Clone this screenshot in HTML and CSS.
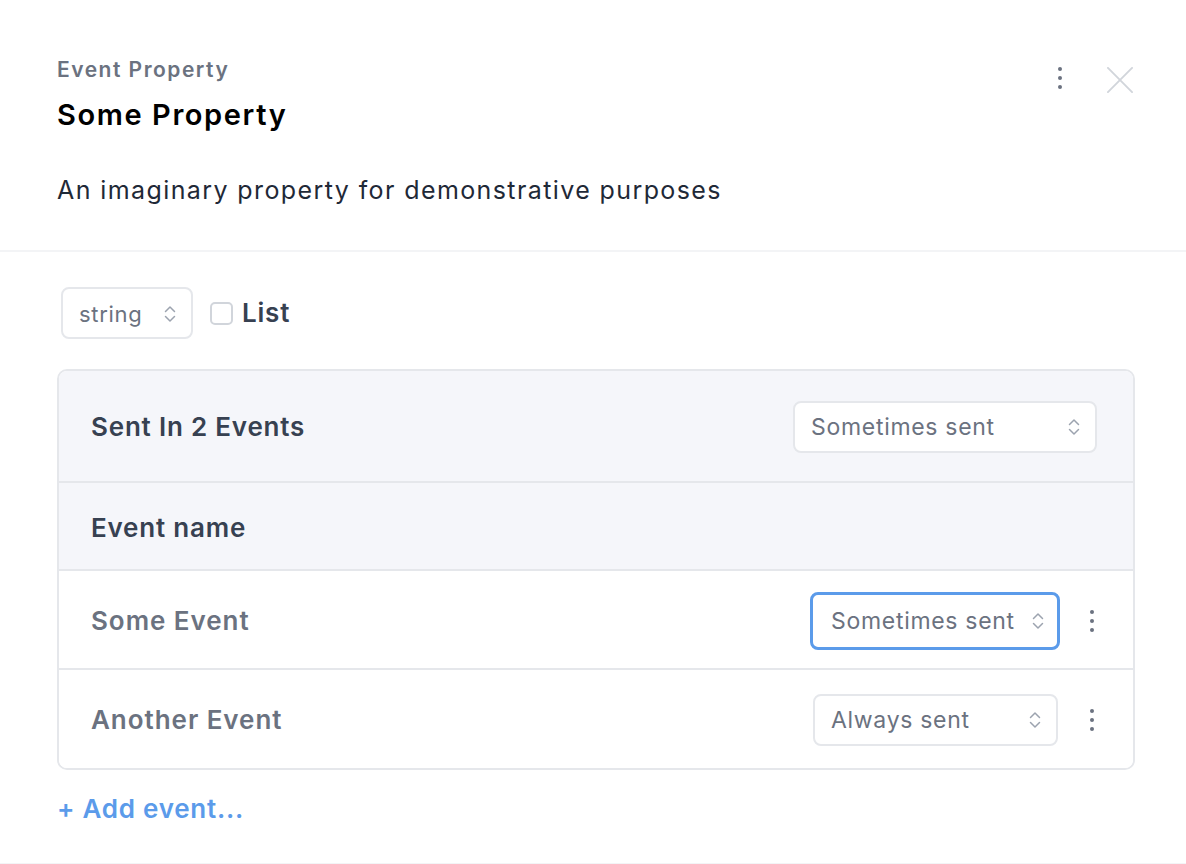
FILE: index.html
```html
<!DOCTYPE html>
<html lang="en">
<head>
<meta charset="utf-8">
<title>Event Property</title>
<link rel="stylesheet" href="styles.css">
</head>
<body>
<div class="panel">
  <header class="header">
    <div class="header-text">
      <div class="kicker">Event Property</div>
      <h1 class="title">Some Property</h1>
      <p class="desc">An imaginary property for demonstrative purposes</p>
    </div>
    <div class="header-actions">
      <span class="icon-btn dots-top">
        <svg width="6" height="22" viewBox="0 0 6 22"><circle cx="3" cy="2" r="2" fill="#6b7280"/><circle cx="3" cy="11" r="2" fill="#6b7280"/><circle cx="3" cy="20" r="2" fill="#6b7280"/></svg>
      </span>
      <span class="icon-btn close">
        <svg width="28" height="28" viewBox="0 0 28 28"><path d="M1 1 L27 27 M27 1 L1 27" stroke="#d1d5db" stroke-width="2" stroke-linecap="round" fill="none"/></svg>
      </span>
    </div>
  </header>

  <section class="body">
    <div class="type-row">
      <div class="select select-type">
        <span>string</span>
        <svg class="chev" width="14" height="22" viewBox="0 0 14 22"><path d="M2.5 8.5 L7 4 L11.5 8.5 M2.5 13.5 L7 18 L11.5 13.5" stroke="#9ca3af" stroke-width="1.5" fill="none" stroke-linecap="round" stroke-linejoin="round"/></svg>
      </div>
      <label class="list-check"><span class="checkbox"></span><span class="list-label">List</span></label>
    </div>

    <div class="card">
      <div class="card-head">
        <div class="card-title">Sent In 2 Events</div>
        <div class="select select-head">
          <span>Sometimes sent</span>
          <svg class="chev" width="14" height="22" viewBox="0 0 14 22"><path d="M2.5 8.5 L7 4 L11.5 8.5 M2.5 13.5 L7 18 L11.5 13.5" stroke="#9ca3af" stroke-width="1.5" fill="none" stroke-linecap="round" stroke-linejoin="round"/></svg>
        </div>
      </div>
      <div class="col-head">Event name</div>
      <div class="row row-1">
        <div class="row-name">Some Event</div>
        <div class="row-actions">
          <div class="select select-row focused">
            <span>Sometimes sent</span>
            <svg class="chev" width="14" height="22" viewBox="0 0 14 22"><path d="M2.5 8.5 L7 4 L11.5 8.5 M2.5 13.5 L7 18 L11.5 13.5" stroke="#9ca3af" stroke-width="1.5" fill="none" stroke-linecap="round" stroke-linejoin="round"/></svg>
          </div>
          <span class="row-dots"><svg width="6" height="22" viewBox="0 0 6 22"><circle cx="3" cy="2" r="2" fill="#6b7280"/><circle cx="3" cy="11" r="2" fill="#6b7280"/><circle cx="3" cy="20" r="2" fill="#6b7280"/></svg></span>
        </div>
      </div>
      <div class="row row-2">
        <div class="row-name">Another Event</div>
        <div class="row-actions">
          <div class="select select-row">
            <span>Always sent</span>
            <svg class="chev" width="14" height="22" viewBox="0 0 14 22"><path d="M2.5 8.5 L7 4 L11.5 8.5 M2.5 13.5 L7 18 L11.5 13.5" stroke="#9ca3af" stroke-width="1.5" fill="none" stroke-linecap="round" stroke-linejoin="round"/></svg>
          </div>
          <span class="row-dots"><svg width="6" height="22" viewBox="0 0 6 22"><circle cx="3" cy="2" r="2" fill="#6b7280"/><circle cx="3" cy="11" r="2" fill="#6b7280"/><circle cx="3" cy="20" r="2" fill="#6b7280"/></svg></span>
        </div>
      </div>
    </div>

    <a class="add-event" href="#">+ Add event...</a>
  </section>
</div>
</body>
</html>
```

FILE: styles.css
```css
* { box-sizing: border-box; }
html, body { margin: 0; padding: 0; background: #fff; }
body {
  font-family: Inter, "Noto Sans", sans-serif;
  width: 1186px;
  height: 864px;
  overflow: hidden;
}
.panel {
  height: 864px;
  border-bottom: 1px solid #f3f4f6;
}
.header {
  display: flex;
  justify-content: space-between;
  padding: 56px 53px 44px 57px;
  border-bottom: 2px solid #f3f4f6;
}
.kicker {
  font-size: 21px;
  line-height: 28px;
  font-weight: 600;
  color: #6b7280;
  letter-spacing: 1.5px;
}
.title {
  margin: 13px 0 0;
  font-size: 29px;
  line-height: 36px;
  font-weight: 600;
  color: #000;
  letter-spacing: 1.6px;
}
.desc {
  margin: 41px 0 0;
  font-size: 25px;
  line-height: 32px;
  color: #1f2937;
  letter-spacing: 1.4px;
}
.header-actions {
  display: flex;
  align-items: flex-start;
  gap: 44px;
  padding-top: 11px;
}
.icon-btn { display: inline-flex; }
.close svg { width: 26px; height: 26px; }

.body {
  padding: 35px 51px 0 57px;
}
.type-row {
  display: flex;
  align-items: center;
  gap: 17px;
  padding-left: 4px;
}
.select {
  display: flex;
  align-items: center;
  justify-content: space-between;
  background: #fff;
  border: 2px solid #e5e7eb;
  border-radius: 8px;
  color: #6b7280;
  font-size: 22px;
  line-height: 28px;
  letter-spacing: 0.7px;
}
.select-type {
  width: 132px;
  height: 52px;
  padding: 2px 14px 0 16px;
}
.list-check {
  display: flex;
  align-items: center;
  gap: 9px;
}
.checkbox {
  width: 23px;
  height: 23px;
  border: 2px solid #d1d5db;
  border-radius: 5px;
  background: #fff;
}
.list-label {
  font-size: 26px;
  font-weight: 600;
  color: #374151;
  line-height: 32px;
  letter-spacing: 0.8px;
}

.card {
  margin-top: 30px;
  border: 2px solid #e5e7eb;
  border-radius: 10px;
  overflow: hidden;
}
.card-head {
  display: flex;
  align-items: center;
  justify-content: space-between;
  height: 112px;
  padding: 2px 36px 0 32px;
  background: #f5f6fa;
  border-bottom: 2px solid #e5e7eb;
}
.card-title, .col-head, .row-name {
  font-size: 26px;
  line-height: 32px;
  font-weight: 600;
  color: #374151;
  letter-spacing: 0.8px;
}
.select-head {
  width: 304px;
  height: 52px;
  padding: 0 14px 0 16px;
  font-size: 23px;
}
.col-head {
  display: flex;
  align-items: center;
  height: 88px;
  padding: 3px 0 0 32px;
  background: #f5f6fa;
  border-bottom: 2px solid #e5e7eb;
}
.row {
  display: flex;
  align-items: center;
  justify-content: space-between;
  padding: 2px 32px 0 32px;
  background: #fff;
}
.row-1 { height: 99px; border-bottom: 2px solid #e5e7eb; }
.row-2 { height: 98px; }
.row-name { color: #6b7280; letter-spacing: 0.95px; }
.row-actions {
  display: flex;
  align-items: center;
  gap: 31px;
}
.select-row {
  width: 245px;
  height: 52px;
  padding: 0 14px 0 16px;
  font-size: 23px;
}
.select-row.focused {
  width: 250px;
  height: 58px;
  border: 3px solid #5b9bea;
  padding: 0 12px 0 18px;
  margin-right: -2px;
}
.row-dots { display: inline-flex; padding-right: 6px; }

.add-event {
  display: inline-block;
  margin-top: 23px;
  font-size: 26px;
  line-height: 32px;
  font-weight: 600;
  color: #5b9bea;
  text-decoration: none;
  letter-spacing: 0.75px;
}
```
